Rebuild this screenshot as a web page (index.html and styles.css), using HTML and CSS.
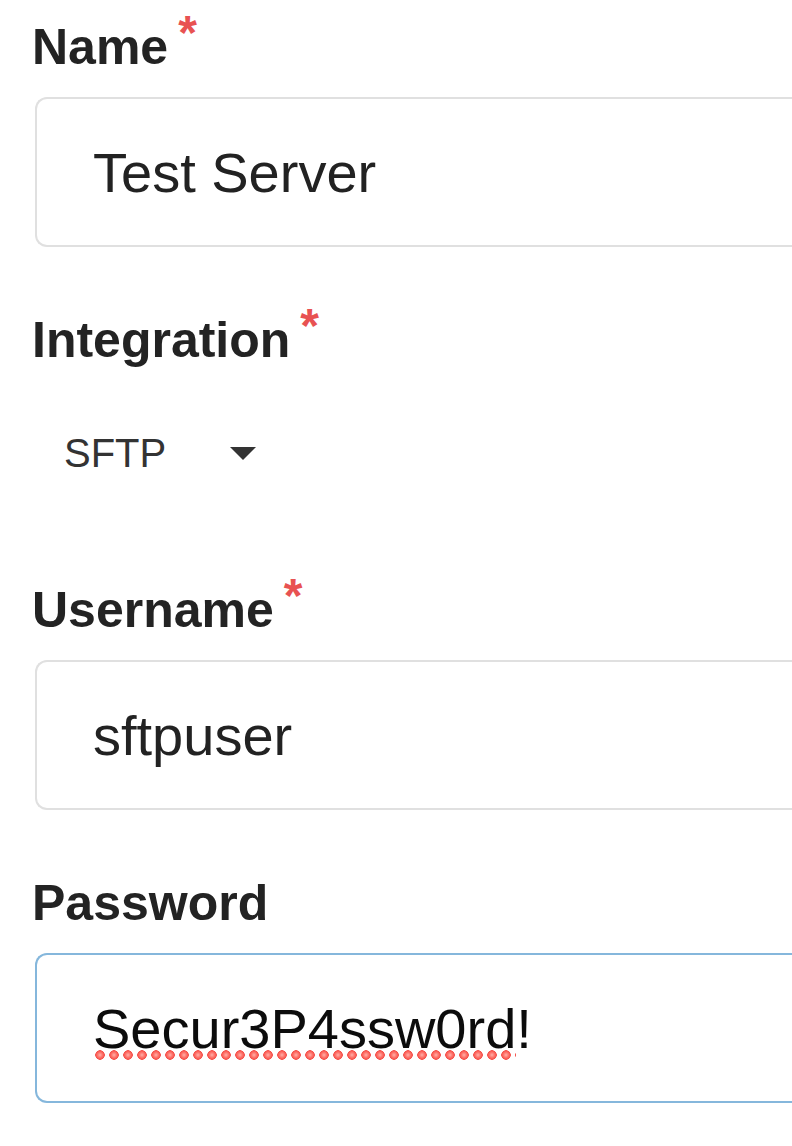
FILE: index.html
```html
<!DOCTYPE html>
<html>
<head>
<meta charset="utf-8">
<link rel="stylesheet" href="styles.css">
</head>
<body>
<form class="form">
  <div class="field">
    <label class="label">Name<span class="req">*</span></label>
    <div class="input">Test Server</div>
  </div>
  <div class="field">
    <label class="label">Integration<span class="req">*</span></label>
    <div class="select"><span class="select-text">SFTP</span><span class="caret"></span></div>
  </div>
  <div class="field">
    <label class="label">Username<span class="req">*</span></label>
    <div class="input">sftpuser</div>
  </div>
  <div class="field">
    <label class="label">Password</label>
    <div class="input input-focus"><span class="misspelled">Secur3P4ssw0rd</span>!</div>
  </div>
</form>
</body>
</html>
```
FILE: styles.css
```css
html, body {
  margin: 0;
  padding: 0;
  background: #ffffff;
}
body {
  font-family: "Liberation Sans", Arial, Helvetica, sans-serif;
  color: #222222;
  overflow: hidden;
}
.form {
  display: flex;
  flex-direction: column;
  gap: 63px;
  padding: 17px 0 0 35px;
}
.field {
  display: flex;
  flex-direction: column;
  gap: 20px;
}
.label {
  display: block;
  margin-left: -3px;
  font-size: 50px;
  line-height: 60px;
  height: 60px;
  font-weight: 700;
  color: #232323;
  white-space: nowrap;
}
.req {
  margin-left: 10px;
  font-size: 48px;
  font-weight: 700;
  line-height: 0;
  color: #e85252;
  vertical-align: 15px;
}
.input {
  box-sizing: border-box;
  height: 150px;
  width: 757px;
  border: 2px solid #e0e0e0;
  border-right: none;
  border-radius: 12px 0 0 12px;
  padding: 1px 0 0 56px;
  display: flex;
  align-items: center;
  font-size: 56px;
  color: #222222;
  white-space: nowrap;
  overflow: hidden;
}
.input-focus {
  border-color: #85b7dc;
  color: #0c0c0c;
}
.misspelled {
  background-image: radial-gradient(circle at 7px 5px, #ffb0a8 0, #fd6a62 3px, #f4504a 4.5px, rgba(255,255,255,0) 5px);
  background-size: 14px 11px;
  background-repeat: repeat-x;
  background-position: 0 100%;
}
.select {
  height: 127px;
  display: flex;
  align-items: center;
  padding-left: 29px;
  gap: 64px;
  font-size: 40px;
  color: #333333;
}
.caret {
  width: 0;
  height: 0;
  border-left: 13px solid transparent;
  border-right: 13px solid transparent;
  border-top: 13px solid #333333;
}
```
